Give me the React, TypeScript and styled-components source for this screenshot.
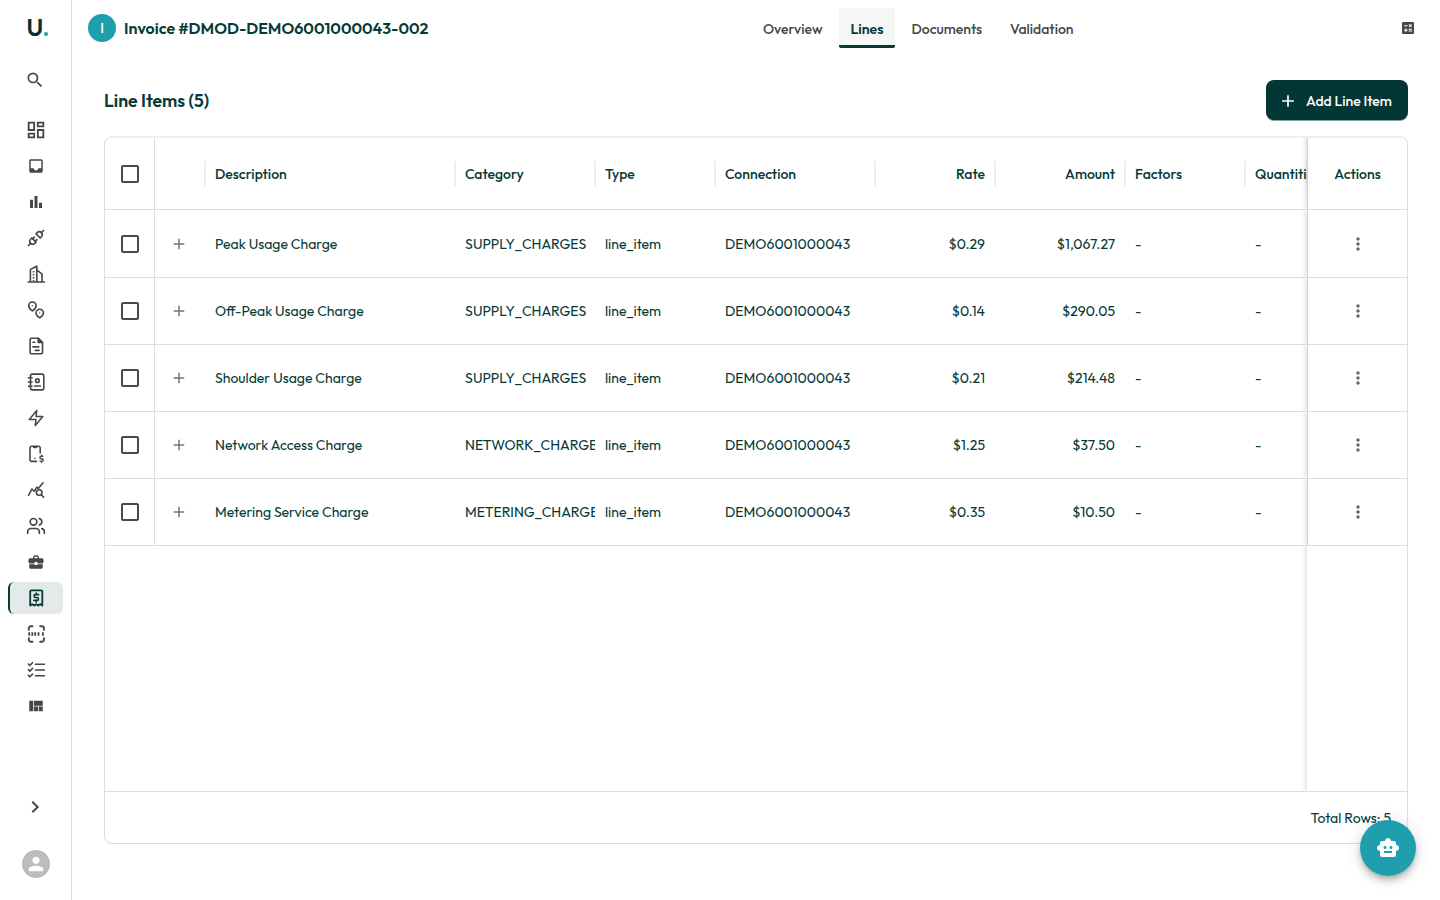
import React from "react";
import styled, { createGlobalStyle, css } from "styled-components";
import {
  MdAdd,
  MdBarChart,
  MdBusinessCenter,
  MdCalculate,
  MdCheckBoxOutlineBlank,
  MdChevronRight,
  MdInbox,
  MdMoreVert,
  MdOutlineDashboard,
  MdPerson,
  MdSearch,
  MdSmartToy,
  MdViewQuilt,
} from "react-icons/md";
import { TbPlugConnected } from "react-icons/tb";
import { FiZap } from "react-icons/fi";
import { Users } from "lucide-react";

const ink = "#053a37";
const teal = "#1f9fae";
const grey = "#464646";
const line = "#dcdddd";

const GlobalStyle = createGlobalStyle`
  *, *::before, *::after { box-sizing: border-box; }
  body {
    margin: 0;
    background: #fff;
    color: ${ink};
    font-family: Outfit, Lato, sans-serif;
    font-size: 14px;
  }
  button { font: inherit; border: 0; padding: 0; background: none; }
  svg { display: block; flex: none; }
`;

const Page = styled.div`
  display: flex;
  width: 1440px;
  height: 900px;
  overflow: hidden;
`;

/* ---------- sidebar ---------- */

const Sidebar = styled.aside`
  display: flex;
  flex-direction: column;
  align-items: center;
  width: 72px;
  flex: none;
  border-right: 1px solid ${line};
  color: ${grey};
`;

const Logo = styled.div`
  display: flex;
  align-items: flex-end;
  gap: 1px;
  width: 100%;
  height: 41px;
  padding: 0 0 2px 26.5px;
  color: #06302f;
  font-size: 24px;
  font-weight: 600;
  line-height: 23px;
`;

const LogoDot = styled.span`
  width: 4px;
  height: 4px;
  margin-bottom: 3px;
  border-radius: 50%;
  background: ${teal};
`;

const SearchButton = styled.button`
  display: grid;
  place-items: center;
  width: 40px;
  height: 40px;
  margin: 19px 1px 0 0;
  color: ${grey};
`;

const Nav = styled.nav`
  display: flex;
  flex-direction: column;
  gap: 4px;
  width: 100%;
  margin-top: 14px;
  padding: 0 8px;
`;

const NavItem = styled.a<{ $active?: boolean }>`
  display: grid;
  place-items: center;
  height: 32px;
  padding-right: 1px;
  border-left: 2px solid transparent;
  border-radius: 6px;
  ${(p) =>
    p.$active &&
    css`
      border-left-color: ${ink};
      background: #e4e9e9;
      color: ${ink};
    `}
`;

const ExpandButton = styled.button`
  margin: auto 1px 0 0;
  color: ${grey};
`;

const UserAvatar = styled.div`
  display: grid;
  place-items: center;
  width: 28px;
  height: 28px;
  margin: 31px 0 22px;
  border-radius: 50%;
  background: #bdbdbd;
  color: #fff;
`;

/* ---------- top bar ---------- */

const Main = styled.main`
  display: flex;
  flex-direction: column;
  flex: 1;
  min-width: 0;
`;

const TopBar = styled.header`
  display: grid;
  grid-template-columns: 663px 1fr auto;
  align-items: center;
  height: 56px;
  padding: 0 24px 0 16px;
`;

const TitleGroup = styled.div`
  display: flex;
  align-items: center;
  gap: 8px;
`;

const Badge = styled.span`
  display: grid;
  place-items: center;
  width: 28px;
  height: 28px;
  border-radius: 50%;
  background: ${teal};
  color: #fff;
  font-size: 14px;
  font-weight: 500;
`;

const Title = styled.h1`
  margin: 0;
  font-size: 16px;
  font-weight: 600;
`;

const Tabs = styled.nav`
  display: flex;
  gap: 4px;
`;

const Tab = styled.a<{ $active?: boolean }>`
  display: flex;
  align-items: center;
  height: 40px;
  padding: 4px 12px 0;
  border-bottom: 3px solid transparent;
  color: ${grey};
  font-weight: 500;
  ${(p) =>
    p.$active &&
    css`
      border-bottom-color: ${ink};
      border-radius: 0 0 2px 2px;
      background: #f4f7f6;
      color: ${ink};
      font-weight: 600;
    `}
`;

const ToolButton = styled.button`
  color: ${grey};
`;

/* ---------- content ---------- */

const Content = styled.section`
  padding: 24px 32px;
`;

const SectionHead = styled.div`
  display: flex;
  align-items: center;
  justify-content: space-between;
  height: 40px;
`;

const SectionTitle = styled.h2`
  margin: 1px 0 0;
  font-size: 17.6px;
  font-weight: 600;
`;

const AddButton = styled.button`
  display: flex;
  align-items: center;
  gap: 8px;
  width: 142px;
  height: 40px;
  padding: 1px 0 0 12px;
  border-radius: 8px;
  background: #033735;
  box-shadow: 0 1px 0 #8aa3a2;
  color: #fff;
  font-weight: 500;
`;

const Table = styled.div`
  display: flex;
  flex-direction: column;
  height: 708px;
  margin-top: 16px;
  border: 1px solid ${line};
  border-top: 2px solid #eeefef;
  border-radius: 8px;
  overflow: hidden;
`;

const rowGrid = css`
  display: grid;
  grid-template-columns: 50px 50px 250px 140px 120px 160px 120px 130px 120px 62px 100px;
`;

const HeaderRow = styled.div`
  ${rowGrid}
  height: 72px;
  border-bottom: 1px solid ${line};
  font-weight: 500;
`;

const BodyRow = styled.div`
  ${rowGrid}
  height: 67px;
  border-bottom: 1px solid ${line};

  ${HeaderRow} + & {
    height: 68px;
  }
`;

const Cell = styled.div<{ $end?: boolean }>`
  display: flex;
  align-items: center;
  justify-content: ${(p) => (p.$end ? "flex-end" : "flex-start")};
  min-width: 0;
  padding-left: 10px;
  padding-right: ${(p) => (p.$end ? 10 : 0)}px;
  overflow: hidden;
  white-space: nowrap;
`;

const divider = "linear-gradient(#eeeeee, #eeeeee)";

/* Each separator straddles a column boundary, one pixel in either cell. */
const HeadCell = styled(Cell)`
  padding-top: 1px;
  background: ${divider} left center / 1px 25px no-repeat, ${divider} right center / 1px 25px no-repeat;
`;

const IconCell = styled.div`
  display: grid;
  place-items: center;
  padding-right: 2px;
  color: #757575;
`;

const HeadIconCell = styled(IconCell)`
  background: ${divider} right center / 1px 25px no-repeat;
`;

const CheckCell = styled(IconCell)`
  padding-right: 0;
  border-right: 1px solid ${line};
  color: #4a4a4a;
`;

const edgeShadow = "-2px 0 4px rgba(0, 0, 0, 0.12)";

const PinnedCell = styled.div`
  display: grid;
  place-items: center;
  border-left: 1px solid #d3d4d4;
  background: #fff;
  box-shadow: ${edgeShadow};
  clip-path: inset(0 0 0 -8px);
  color: #666;
`;

const PinnedHead = styled(PinnedCell)`
  padding-top: 1px;
  color: ${ink};
`;

const EmptyArea = styled.div`
  display: flex;
  justify-content: flex-end;
  flex: 1;
`;

const PinnedFill = styled.div`
  width: 100px;
  background: #fff;
  box-shadow: ${edgeShadow};
  clip-path: inset(0 0 0 -8px);
`;

const Footer = styled.div`
  display: flex;
  align-items: center;
  justify-content: flex-end;
  height: 52px;
  padding: 1px 16px 0 0;
  border-top: 1px solid ${line};
`;

const ChatButton = styled.button`
  position: fixed;
  right: 24px;
  bottom: 24px;
  display: grid;
  place-items: center;
  width: 56px;
  height: 56px;
  border-radius: 50%;
  background: ${teal};
  box-shadow: 0 3px 5px -1px rgba(0, 0, 0, 0.2), 0 6px 10px rgba(0, 0, 0, 0.14),
    0 1px 18px rgba(0, 0, 0, 0.12);
  color: #fff;
`;

/* ---------- icons drawn on an 18px grid ---------- */

const Glyph = styled.svg.attrs({ width: 18, height: 18, viewBox: "0 0 18 18" })`
  fill: none;
  stroke: currentColor;
  stroke-width: 1.6;
  stroke-linecap: round;
  stroke-linejoin: round;
`;

const BuildingsIcon = () => (
  <Glyph>
    <path d="M1.200 17h16.200M3.400 17V4.400L9.800 1.200V17M9.800 5.200l5.200 3.600V17" />
    <path d="M6.600 6v10" strokeDasharray="1.500 1.500" strokeLinecap="butt" />
  </Glyph>
);

const PinsIcon = () => (
  <Glyph>
    <path d="M5.400 9.900C3.200 8.300 1.700 6.600 1.700 4.700a3.700 3.700 0 0 1 7.400 0c0 1.900-1.500 3.600-3.700 5.200z" />
    <path d="M12.700 16.900c-2.200-1.500-3.700-3.100-3.700-5a3.700 3.700 0 0 1 7.400 0c0 1.900-1.500 3.500-3.700 5z" />
    <path d="M5.400 4.700h.01M12.700 11.800h.01" strokeWidth="1.300" />
  </Glyph>
);

const DocumentIcon = () => (
  <Glyph>
    <path d="M11.200 1.200H4.700A1.600 1.600 0 0 0 3.100 2.800v12.400a1.600 1.600 0 0 0 1.600 1.600h9.200a1.600 1.600 0 0 0 1.600-1.600V5.500z" />
    <path d="M11.200 1.200v4.300h4.300z" fill="currentColor" />
    <path d="M6 5.200h1.800M6 9.900h5.800M8.300 13.400h3.700" />
  </Glyph>
);

const ContactsIcon = () => (
  <Glyph>
    <rect x="3.500" y="1.100" width="13.300" height="15.800" rx="1.800" />
    <path d="M1.400 4.800h3.700M1.400 9h3.700M1.400 13.200h3.700" />
    <circle cx="10.400" cy="7.700" r="1.800" />
    <path d="M7.600 13h5.800" />
  </Glyph>
);

const PhoneBillIcon = () => (
  <Glyph>
    <path d="M9.400 16.400H4.700A1.700 1.700 0 0 1 3 14.700V2.900a1.700 1.700 0 0 1 1.700-1.700h6.800a1.700 1.700 0 0 1 1.700 1.700v5M6.300 1.500l.5 1h2.600l.5-1M8 13.200h.01" />
    <path
      d="M15.900 11.300h-1.800a1.150 1.150 0 0 0 0 2.400h.9a1.150 1.150 0 0 1 0 2.400h-2M14.500 10.200v1M14.500 16.200v1"
      strokeWidth="1.400"
    />
  </Glyph>
);

const TrendSearchIcon = () => (
  <Glyph>
    <path d="M1.700 14.200 4.900 8l2.300 2.300 2.600-4.200 1.500 1.400 4.700-5.700" />
    <circle cx="12.200" cy="11.500" r="2.800" />
    <path d="m14.300 13.700 2.300 2.500" />
  </Glyph>
);

const ReceiptIcon = () => (
  <Glyph>
    <path
      d="M3.200 16.600V2.500a1.200 1.200 0 0 1 1.200-1.200h9.700a1.200 1.200 0 0 1 1.200 1.200v14.100l-2-1.400-2 1.400-2-1.400-2 1.400-2-1.400z"
      strokeWidth="1.800"
    />
    <path
      d="M11.600 5.700H8.500a1.400 1.400 0 0 0 0 2.800h1.500a1.400 1.400 0 0 1 0 2.800H6.900M9.250 4.200v1.500M9.250 11.400v1.500"
      strokeWidth="1.700"
    />
  </Glyph>
);

const ScanIcon = () => (
  <Glyph>
    <path
      d="M1.800 4.700V3.300a2 2 0 0 1 2-2h1.700M13.200 1.300h1.700a2 2 0 0 1 2 2v1.400M16.900 13.300v1.400a2 2 0 0 1-2 2h-1.700M5.500 16.700H3.800a2 2 0 0 1-2-2v-1.400"
      strokeWidth="1.900"
    />
    <path
      d="M2.200 7.300v3.400M5.300 7.300v3.400M8.200 7.300v3.400M11.500 7.300v3.400M15.900 7.300v3.400"
      strokeWidth="1.800"
      strokeLinecap="butt"
    />
  </Glyph>
);

const ChecklistIcon = () => (
  <Glyph>
    <path d="m1.400 3 1.400 1.400 2.700-2.700M1.400 8.700l1.400 1.400 2.700-2.700M1.400 14.400l1.400 1.400 2.700-2.700M8.400 3.300h9M8.400 9h9M8.400 14.700h9" />
  </Glyph>
);

/* ---------- data ---------- */

const navIcons = [
  <MdOutlineDashboard size={22} />,
  <MdInbox size={18} />,
  <MdBarChart size={18} />,
  <TbPlugConnected size={20} />,
  <BuildingsIcon />,
  <PinsIcon />,
  <DocumentIcon />,
  <ContactsIcon />,
  <FiZap size={18} />,
  <PhoneBillIcon />,
  <TrendSearchIcon />,
  <Users size={20} />,
  <MdBusinessCenter size={18} />,
  <ReceiptIcon />,
  <ScanIcon />,
  <ChecklistIcon />,
  <MdViewQuilt size={18} />,
];
const activeNav = 13;

const tabs = ["Overview", "Lines", "Documents", "Validation"];

const columns = [
  { label: "Description" },
  { label: "Category" },
  { label: "Type" },
  { label: "Connection" },
  { label: "Rate", end: true },
  { label: "Amount", end: true },
  { label: "Factors" },
  { label: "Quantities" },
];

const rows = [
  { description: "Peak Usage Charge", category: "SUPPLY_CHARGES", rate: "$0.29", amount: "$1,067.27" },
  { description: "Off-Peak Usage Charge", category: "SUPPLY_CHARGES", rate: "$0.14", amount: "$290.05" },
  { description: "Shoulder Usage Charge", category: "SUPPLY_CHARGES", rate: "$0.21", amount: "$214.48" },
  { description: "Network Access Charge", category: "NETWORK_CHARGES", rate: "$1.25", amount: "$37.50" },
  { description: "Metering Service Charge", category: "METERING_CHARGES", rate: "$0.35", amount: "$10.50" },
];

export default function App() {
  return (
    <Page>
      <GlobalStyle />
      <Sidebar>
        <Logo>
          U<LogoDot />
        </Logo>
        <SearchButton aria-label="Search">
          <MdSearch size={20} />
        </SearchButton>
        <Nav>
          {navIcons.map((icon, i) => (
            <NavItem key={i} $active={i === activeNav}>
              {icon}
            </NavItem>
          ))}
        </Nav>
        <ExpandButton aria-label="Expand">
          <MdChevronRight size={24} />
        </ExpandButton>
        <UserAvatar>
          <MdPerson size={22} />
        </UserAvatar>
      </Sidebar>

      <Main>
        <TopBar>
          <TitleGroup>
            <Badge>I</Badge>
            <Title>Invoice #DMOD-DEMO6001000043-002</Title>
          </TitleGroup>
          <Tabs>
            {tabs.map((label) => (
              <Tab key={label} $active={label === "Lines"}>
                {label}
              </Tab>
            ))}
          </Tabs>
          <ToolButton aria-label="Calculator">
            <MdCalculate size={16} />
          </ToolButton>
        </TopBar>

        <Content>
          <SectionHead>
            <SectionTitle>Line Items (5)</SectionTitle>
            <AddButton>
              <MdAdd size={20} />
              Add Line Item
            </AddButton>
          </SectionHead>

          <Table>
            <HeaderRow>
              <CheckCell>
                <MdCheckBoxOutlineBlank size={24} />
              </CheckCell>
              <HeadIconCell />
              {columns.map(({ label, end }) => (
                <HeadCell key={label} $end={end}>
                  {label}
                </HeadCell>
              ))}
              <PinnedHead>Actions</PinnedHead>
            </HeaderRow>
            {rows.map(({ description, category, rate, amount }) => (
              <BodyRow key={description}>
                <CheckCell>
                  <MdCheckBoxOutlineBlank size={24} />
                </CheckCell>
                <IconCell>
                  <MdAdd size={18} />
                </IconCell>
                <Cell>{description}</Cell>
                <Cell>{category}</Cell>
                <Cell>line_item</Cell>
                <Cell>DEMO6001000043</Cell>
                <Cell $end>{rate}</Cell>
                <Cell $end>{amount}</Cell>
                <Cell>-</Cell>
                <Cell>-</Cell>
                <PinnedCell>
                  <MdMoreVert size={20} />
                </PinnedCell>
              </BodyRow>
            ))}
            <EmptyArea>
              <PinnedFill />
            </EmptyArea>
            <Footer>Total Rows: 5</Footer>
          </Table>
        </Content>
      </Main>

      <ChatButton aria-label="Assistant">
        <MdSmartToy size={24} />
      </ChatButton>
    </Page>
  );
}
